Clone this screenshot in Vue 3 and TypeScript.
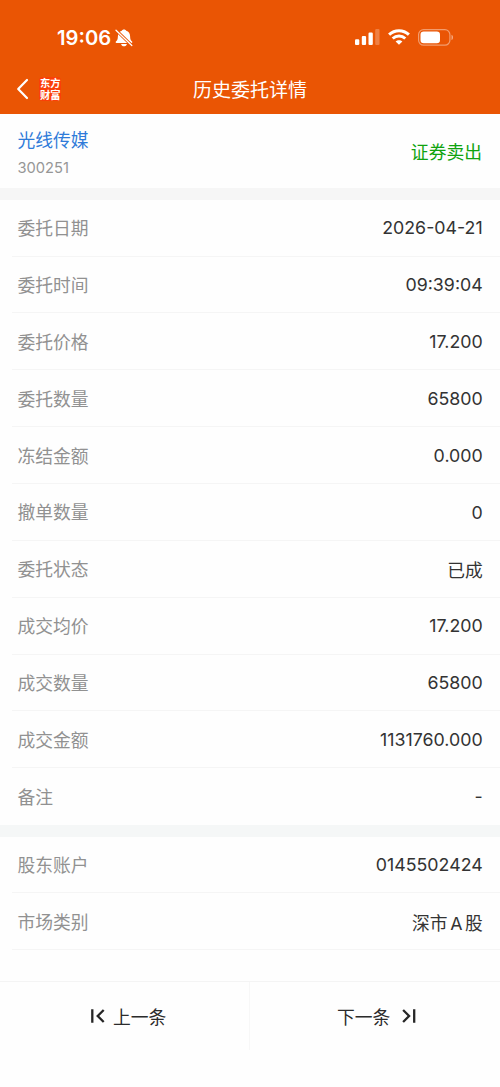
<script setup lang="ts">
interface Field {
  label: string
  value: string
}

const orderFields: Field[] = [
  { label: '委托日期', value: '2026-04-21' },
  { label: '委托时间', value: '09:39:04' },
  { label: '委托价格', value: '17.200' },
  { label: '委托数量', value: '65800' },
  { label: '冻结金额', value: '0.000' },
  { label: '撤单数量', value: '0' },
  { label: '委托状态', value: '已成' },
  { label: '成交均价', value: '17.200' },
  { label: '成交数量', value: '65800' },
  { label: '成交金额', value: '1131760.000' },
  { label: '备注', value: '-' },
]

const accountFields: Field[] = [
  { label: '股东账户', value: '0145502424' },
  { label: '市场类别', value: '深市 A 股' },
]
</script>

<template>
  <div class="screen">
    <header class="top">
      <div class="status">
        <span class="time">19:06</span>
        <svg class="bell" width="18" height="18" viewBox="0 0 18 18">
          <path d="M9 .4c1.200 0 2 .6 2.200 1.400 2.600.9 3.900 2.900 3.900 5.400 0 3.200.8 4.300 2 5.400.5.600.2 1.500-.6 1.500H1.500c-.8 0-1.100-.9-.6-1.500C2.100 11.500 2.900 10.400 2.900 7.200c0-2.500 1.300-4.500 3.900-5.400C7 1 7.800.4 9 .4z" fill="#fff" />
          <path d="M6.100 14.900h5.800c-.3 1.500-1.500 2.300-2.900 2.300s-2.600-.8-2.900-2.300z" fill="#fff" />
          <path d="M0 .2 18 17.600" stroke="#ea5504" stroke-width="3" />
          <path d="M1 1.200 16.800 16.500" stroke="#fff" stroke-width="1.300" stroke-linecap="round" />
        </svg>
        <span class="spacer"></span>
        <svg class="signal" width="25" height="16" viewBox="0 0 25 16">
          <rect x="0" y="10.300" width="4.300" height="5.700" rx="1.100" fill="#fff" />
          <rect x="6.800" y="7" width="4.300" height="9" rx="1.100" fill="#fff" />
          <rect x="13.500" y="3.600" width="4.300" height="12.400" rx="1.100" fill="#fff" />
          <rect x="20.200" y="0" width="4.300" height="16" rx="1.100" fill="#fff" opacity=".25" />
        </svg>
        <svg class="wifi" width="22" height="16" viewBox="0 0 22 16">
          <g fill="none" stroke="#fff" stroke-width="3">
            <path d="M1.100 5.600C6.700.3 15.300.3 20.900 5.600" />
            <path d="M4.700 9.500c3.600-3.300 9-3.300 12.600 0" />
          </g>
          <path d="M7.600 12.500c1.900-1.800 4.900-1.800 6.800 0L11 15.800z" fill="#fff" />
        </svg>
        <svg class="battery" width="36" height="17" viewBox="0 0 36 17">
          <rect x=".6" y=".6" width="31.300" height="15.600" rx="5" fill="none" stroke="#fff" stroke-opacity=".42" stroke-width="1.200" />
          <rect x="2.500" y="2.500" width="19.500" height="11.800" rx="3.200" fill="#fff" />
          <path d="M33.500 5.700c2 .8 2 4.600 0 5.400z" fill="#fff" opacity=".5" />
        </svg>
      </div>
      <nav class="nav">
        <svg class="back" width="13" height="22" viewBox="0 0 13 22">
          <path d="M11 2 2.200 11 11 20" fill="none" stroke="#fff" stroke-width="2.200" stroke-linecap="round" stroke-linejoin="round" />
        </svg>
        <div class="logo">东方财富</div>
        <h1 class="title">历史委托详情</h1>
      </nav>
    </header>

    <section class="stock">
      <div>
        <div class="name">光线传媒</div>
        <div class="code">300251</div>
      </div>
      <div class="side">证券卖出</div>
    </section>

    <div class="gap"></div>
    <section>
      <div v-for="f in orderFields" :key="f.label" class="row">
        <span class="label">{{ f.label }}</span>
        <span class="value">{{ f.value }}</span>
      </div>
    </section>
    <div class="gap cool"></div>
    <section>
      <div v-for="f in accountFields" :key="f.label" class="row lined">
        <span class="label">{{ f.label }}</span>
        <span class="value">{{ f.value }}</span>
      </div>
    </section>

    <footer class="pager">
      <button class="page prev" type="button">
        <svg width="14" height="14" viewBox="0 0 14 14">
          <path d="M1.300.3v13.400M12.700 1 6.700 7l6 6" fill="none" stroke="#262626" stroke-width="2.300" />
        </svg>
        <span>上一条</span>
      </button>
      <button class="page next" type="button">
        <span>下一条</span>
        <svg width="14" height="14" viewBox="0 0 14 14">
          <path d="M12.200.3v13.400M1.100 1l6 6-6 6" fill="none" stroke="#262626" stroke-width="2.300" />
        </svg>
      </button>
    </footer>
  </div>
</template>

<style>
body {
  margin: 0;
  background: #fefefe;
}
</style>

<style scoped>
.screen {
  width: 500px;
  height: 1087px;
  overflow: hidden;
  display: flex;
  flex-direction: column;
  background: #fefefe;
  color: #333;
  font-family: Inter, "Noto Sans CJK SC", sans-serif;
  font-size: 17.800px;
}
.top {
  height: 114px;
  flex: none;
  background: #ea5504;
  color: #fff;
}
.status {
  height: 64px;
  padding: 10px 46px 0 57px;
  box-sizing: border-box;
  display: flex;
  align-items: center;
}
.time {
  padding-top: 2px;
  font-size: 20.200px;
  font-weight: 600;
  line-height: 24px;
}
.bell {
  margin-left: 4px;
  margin-top: 1px;
}
.spacer {
  flex: 1;
}
.wifi {
  margin-left: 8px;
}
.battery {
  margin-left: 8px;
}
.nav {
  height: 50px;
  padding-left: 16px;
  display: grid;
  grid-template-columns: 23px 22px 1fr 61px;
  align-items: center;
}
.logo {
  width: 22px;
  height: 24px;
  box-sizing: border-box;
  padding: 0 0 0 1px;
  border-radius: 4px;
  background: #fb3f08;
  font-family: "Noto Sans CJK SC", sans-serif;
  font-size: 10.300px;
  line-height: 12px;
  font-weight: 700;
  word-break: break-all;
}
.title {
  margin: 0;
  padding-top: 4px;
  text-align: center;
  font-size: 19px;
  line-height: 28px;
  font-weight: 400;
}
.stock {
  height: 74.300px;
  flex: none;
  padding: 0 18px 0 17.500px;
  box-sizing: border-box;
  display: flex;
  justify-content: space-between;
  align-items: center;
}
.name {
  padding-top: 5px;
  color: #2f7bd9;
  line-height: 28px;
}
.code {
  margin-top: 1px;
  font-size: 14.700px;
  line-height: 24px;
  color: #969696;
}
.side {
  padding-bottom: 1px;
  color: #0fa30f;
}
.gap {
  height: 11.500px;
  flex: none;
  background: #f6f6f6;
}
.gap.cool {
  background: #f5f7f7;
}
.row {
  height: 56.850px;
  margin-left: 12px;
  padding: 0 17.300px 0 5.500px;
  box-sizing: border-box;
  border-bottom: 1px solid #f5f5f5;
  display: flex;
  justify-content: space-between;
  align-items: center;
}
.row:last-child:not(.lined) {
  border-bottom-color: transparent;
}
.label {
  padding-bottom: 1px;
  color: #919191;
}
.value {
  padding-top: 0.500px;
  word-spacing: -2.500px;
}
.pager {
  margin-top: 30.700px;
  height: 106px;
  flex: none;
  border-top: 1px solid #f4f4f4;
  display: grid;
  grid-template-columns: 250px 250px;
}
.page {
  height: 68px;
  padding: 0;
  border: 0;
  background: none;
  display: flex;
  align-items: center;
  font: inherit;
  color: #2b2b2b;
}
.prev {
  padding-left: 91px;
  gap: 8px;
  border-right: 1px solid #f7f7f7;
}
.next {
  padding-left: 87px;
  gap: 12px;
}
</style>
